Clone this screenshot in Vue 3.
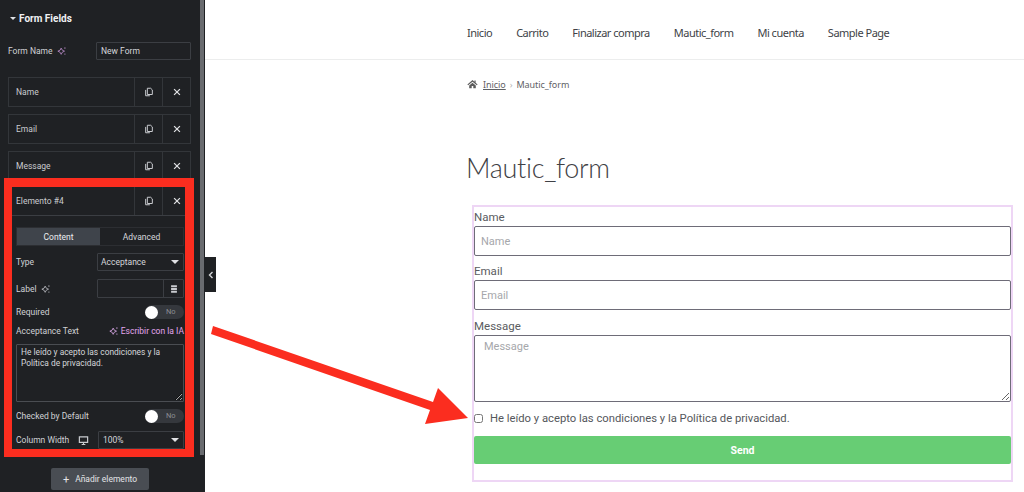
<script setup>
const nav = ['Inicio', 'Carrito', 'Finalizar compra', 'Mautic_form', 'Mi cuenta', 'Sample Page']
const rows = ['Name', 'Email', 'Message']
const fields = [
  { label: 'Name', cls: 'f-input' },
  { label: 'Email', cls: 'f-input' }
]
</script>

<template>
  <div class="page">
    <aside class="side">
      <div class="sec-head"><span class="caret small"></span>Form Fields</div>
      <div class="name-row">
        <span class="lbl">Form Name
          <svg class="spark" viewBox="0 0 12 12"><path d="M5 2.5 6.3 5 9 6.2 6.3 7.5 5 10 3.7 7.5 1 6.2 3.7 5Z" fill="none" stroke="#b98bc9" stroke-width="1"/><path d="M9.5 1.5v2M9.5 9v1.5" stroke="#b98bc9"/></svg>
        </span>
        <div class="ctl name-ctl">New Form</div>
      </div>
      <div class="rows">
        <div v-for="r in rows" :key="r" class="rep">
          <span class="rep-t">{{ r }}</span>
          <span class="rep-b"><svg class="ic" viewBox="0 0 12 12"><path d="M4 1.5h4l2 2v5.5H4Z M2 3.5v7h5" fill="none" stroke="#c9cbcf" stroke-width="1.2"/></svg></span>
          <span class="rep-b"><svg class="ic" viewBox="0 0 12 12"><path d="M2.5 2.5l7 7M9.5 2.5l-7 7" stroke="#e0e1e4" stroke-width="1.5"/></svg></span>
        </div>
      </div>
      <div class="frame">
        <div class="rep open">
          <span class="rep-t">Elemento #4</span>
          <span class="rep-b"><svg class="ic" viewBox="0 0 12 12"><path d="M4 1.5h4l2 2v5.5H4Z M2 3.5v7h5" fill="none" stroke="#c9cbcf" stroke-width="1.2"/></svg></span>
          <span class="rep-b"><svg class="ic" viewBox="0 0 12 12"><path d="M2.5 2.5l7 7M9.5 2.5l-7 7" stroke="#e0e1e4" stroke-width="1.5"/></svg></span>
        </div>
        <div class="body">
          <div class="tabs"><span class="tab on">Content</span><span class="tab">Advanced</span></div>
          <div class="line type-l"><span class="lbl">Type</span><div class="ctl sel">Acceptance<span class="caret"></span></div></div>
          <div class="line label-l">
            <span class="lbl">Label
              <svg class="spark" viewBox="0 0 12 12"><path d="M5 2.5 6.3 5 9 6.2 6.3 7.5 5 10 3.7 7.5 1 6.2 3.7 5Z" fill="none" stroke="#b9bbc0" stroke-width="1"/><path d="M9.5 1.5v2M9.5 9v1.5" stroke="#b9bbc0"/></svg>
            </span>
            <div class="ctl lab-ctl"><span class="db"><svg class="ic" viewBox="0 0 12 12"><path d="M2.5 1.5h7v2.500h-7Zm0 3.300h7v2.500h-7Zm0 3.300h7v2.500h-7Z" fill="#c9cbcf"/></svg></span></div>
          </div>
          <div class="line req-l"><span class="lbl">Required</span><span class="toggle"><i></i><b>No</b></span></div>
          <div class="line acc-l">
            <span class="lbl">Acceptance Text</span>
            <span class="ai"><svg class="spark" viewBox="0 0 12 12"><path d="M5 2.500 6.300 5 9 6.200 6.300 7.500 5 10 3.700 7.500 1 6.200 3.700 5Z" fill="none" stroke="#d9a7e6" stroke-width="1"/><path d="M9.500 1.500v2M9.500 9v1.500" stroke="#d9a7e6"/></svg>Escribir con la IA</span>
          </div>
          <textarea class="ta" readonly>He leído y acepto las condiciones y la Política de privacidad.</textarea>
          <div class="line chk-l"><span class="lbl">Checked by Default</span><span class="toggle"><i></i><b>No</b></span></div>
          <div class="line col-l">
            <span class="lbl">Column Width</span>
            <svg class="mon" viewBox="0 0 12 12"><path d="M1.500 2h9v6h-9Z" fill="none" stroke="#c9cbcf" stroke-width="1.300"/><path d="M4 10.300h4M6 8v2" stroke="#c9cbcf" stroke-width="1.200"/></svg>
            <div class="ctl sel col-ctl">100%<span class="caret"></span></div>
          </div>
        </div>
      </div>
      <button class="add"><span class="plus">+</span>Añadir elemento</button>
      <span class="scroll"></span>
      <span class="collapse"><svg viewBox="0 0 6 8" width="6" height="8"><path d="M4.500 1 1.500 4l3 3" fill="none" stroke="#d5d6d9" stroke-width="1.400"/></svg></span>
    </aside>

    <main class="main">
      <nav class="nav"><a v-for="n in nav" :key="n">{{ n }}</a></nav>
      <div class="content">
        <div class="crumb">
          <svg class="home" viewBox="0 0 14 12"><path d="M7 1 .5 6.500l1 1L7 3l5.500 4.500 1-1L11 4.400V1.500H9.500v1.600ZM2.800 8v3.500h3.200V8.500h2v3h3.200V8L7 4.500Z" fill="#5b5b5b"/></svg>
          <u>Inicio</u><span class="sep">›</span><span>Mautic_form</span>
        </div>
        <h1>Mautic_form</h1>
        <form class="form" @submit.prevent>
          <template v-for="f in fields" :key="f.label">
            <label>{{ f.label }}</label>
            <input :class="f.cls" :placeholder="f.label" />
          </template>
          <label class="msg-l">Message</label>
          <textarea class="f-ta" placeholder="Message"></textarea>
          <div class="acc"><input type="checkbox" /><span>He leído y acepto las condiciones y la Política de privacidad.</span></div>
          <button class="send">Send</button>
        </form>
      </div>
    </main>

    <svg class="arrow" viewBox="0 0 1024 492" width="1024" height="492">
      <path d="M213 326 433 402 438 388 468 418 425 424 430 410 211 334Z" fill="#fb2d1f"/>
    </svg>
  </div>
</template>

<style>
html, body { margin: 0; overflow: hidden; background: #fff; }
</style>

<style scoped>
.page { position: relative; display: flex; width: 1024px; height: 492px; overflow: hidden; background: #fff; font-family: Roboto, "Liberation Sans", sans-serif; }
.side { position: relative; flex: 0 0 205px; width: 205px; height: 492px; background: #1f2124; color: #d5d7db; font-family: Roboto, sans-serif; font-size: 8.500px; box-sizing: border-box; }
.sec-head { height: 36px; display: flex; align-items: center; padding-left: 10px; color: #f0f1f3; font-size: 10px; font-weight: 700; }
.caret { width: 0; height: 0; border-left: 4px solid transparent; border-right: 4px solid transparent; border-top: 4px solid #e0e1e4; }
.caret.small { border-width: 3px 3px 0; margin-right: 3px; }
.lbl { color: #d0d2d6; display: inline-flex; align-items: center; gap: 4px; white-space: nowrap; }
.spark { width: 10px; height: 10px; flex: none; }
.name-row { display: flex; align-items: center; justify-content: space-between; height: 18px; margin: 6px 14px 0 8px; }
.ctl { border: 1px solid #3b3e43; box-sizing: border-box; height: 18px; display: flex; align-items: center; color: #d5d7db; border-radius: 1px; }
.name-ctl { width: 95px; padding-left: 4px; }
.rows { margin: 17px 14px 0 8px; display: flex; flex-direction: column; gap: 7px; }
.rep { height: 30px; box-sizing: border-box; border: 1px solid #33363a; display: flex; align-items: stretch; }
.rep-t { flex: 1; display: flex; align-items: center; padding-left: 7px; color: #c9cbcf; }
.rep-b { width: 28px; display: flex; align-items: center; justify-content: center; border-left: 1px solid #33363a; box-sizing: border-box; }
.ic { width: 10px; height: 10px; }
.frame { position: relative; width: 190px; margin: -3px 0 0 4px; height: 279px; box-sizing: border-box; border: solid #fb2d1f; border-width: 9px 9px 8px 8px; background: #1f2124; }
.rep.open { height: 29px; border-width: 0 0 1px; border-color: #3b3e43; }
.rep.open .rep-t { padding-left: 4px; }
.rep.open .rep-b { width: 28px; }
.rep.open .rep-b:last-child { width: 23px; justify-content: flex-start; padding-left: 9px; }
.body { padding: 0 1px 0 4px; }
.tabs { display: flex; height: 19px; margin-top: 11px; border: 1px solid #2c2e32; box-sizing: border-box; }
.tab { flex: 1; display: flex; align-items: center; justify-content: center; color: #d5d7db; }
.tab.on { background: #3f444b; color: #eceef0; }
.line { display: flex; align-items: center; justify-content: space-between; }
.sel { justify-content: space-between; padding: 0 4px 0 3px; }
.type-l { margin-top: 7px; height: 18px; }
.type-l .ctl { width: 87px; }
.label-l { margin-top: 8px; height: 19px; }
.lab-ctl { width: 87px; height: 19px; justify-content: flex-end; }
.db { width: 19px; height: 17px; border-left: 1px solid #3b3e43; display: flex; align-items: center; justify-content: center; }
.req-l { margin-top: 7px; height: 14px; }
.toggle { position: relative; width: 39px; height: 14px; border-radius: 7px; background: #35383d; display: block; }
.toggle i { position: absolute; left: 0; top: 0.500px; width: 13px; height: 13px; border-radius: 50%; background: #fff; }
.toggle b { position: absolute; left: 21px; top: 2px; font-weight: 400; font-size: 7.500px; color: #8b8e93; }
.acc-l { margin-top: 5px; height: 14px; }
.ai { color: #e2a6ee; display: inline-flex; align-items: center; gap: 2px; white-space: nowrap; }
.ta { display: block; width: 168px; height: 58px; margin: 6px 0 0; padding: 2px 4px; box-sizing: border-box; background: transparent; border: 1px solid #4a4d52; border-radius: 1px; color: #d5d7db; font: 8.400px/11px Roboto, sans-serif; outline: none; }
.chk-l { margin-top: 7px; height: 14px; }
.col-l { margin-top: 8px; height: 18px; }
.mon { width: 11px; height: 11px; margin-left: 9px; }
.col-ctl { width: 86px; margin-left: auto; padding-left: 4px; }
.add { position: relative; display: flex; align-items: center; justify-content: center; gap: 6px; width: 98px; height: 22px; margin: 11px 0 0 51px; padding: 0; border: 0; border-radius: 2px; background: #494d53; color: #e3e4e7; font: 8.500px Roboto, sans-serif; }
.plus { font-size: 11px; line-height: 1; }
.scroll { position: absolute; left: 200px; top: 0; width: 4px; height: 455px; background: #696b6f; }
.collapse { position: absolute; left: 205px; top: 257px; width: 11px; height: 35px; background: #1f2124; display: flex; align-items: center; justify-content: center; z-index: 2; }

.main { flex: 1; min-width: 0; color: #43454b; }
.nav { height: 54px; padding-top: 5px; border-bottom: 1px solid #eceded; display: flex; align-items: center; gap: 24px; padding-left: 262px; font-family: "Noto Sans", "Open Sans", sans-serif; font-size: 11px; letter-spacing: -0.500px; color: #404246; }
.content { padding-left: 262px; }
.crumb { display: flex; align-items: center; height: 14px; margin-top: 17px; font-family: "Noto Sans", sans-serif; font-size: 9px; letter-spacing: -0.050px; color: #5f6165; }
.home { width: 11px; height: 10px; margin-right: 5px; }
.sep { margin: 0 4px; color: #b5b5b5; }
h1 { margin: 58px 0 0 -1px; height: 36px; display: flex; align-items: center; font: 300 27px Lato, "Open Sans", sans-serif; letter-spacing: -0.300px; color: #3f4145; }
.form { width: 541px; height: 277px; margin: 20px 0 0 5px; box-sizing: border-box; border: 2px solid #eed6f5; padding: 3px 0 0 0; display: flex; flex-direction: column; }
label { display: block; height: 15px; line-height: 15px; font-size: 11.500px; color: #5a5c61; }
.msg-l { margin-top: 1px; }
.f-input { display: block; width: 537px; height: 30px; margin: 1px 0 8px; box-sizing: border-box; padding: 0 6px; border: 1px solid #6e6c78; border-radius: 2px; font: 11px Roboto, sans-serif; outline: none; background: #fff; }
.f-ta { display: block; width: 537px; height: 67px; margin: 1px 0 0; box-sizing: border-box; padding: 4px 9px; border: 1px solid #6e6c78; border-radius: 2px; font: 11px Roboto, sans-serif; outline: none; background: #fff; }
input::placeholder, textarea::placeholder { color: #a6a7ab; opacity: 1; }
.acc { display: flex; align-items: center; height: 14px; margin-top: 9px; font-size: 11.250px; color: #55575c; }
.acc input { width: 9px; height: 9px; margin: 0 7px 0 0; flex: none; }
.send { width: 537px; height: 28px; margin-top: 11px; border: 0; border-radius: 2px; background: #67cd74; color: #fff; font: 700 10.500px Roboto, sans-serif; padding: 0; }
.arrow { position: absolute; left: 0; top: 0; pointer-events: none; }
</style>
